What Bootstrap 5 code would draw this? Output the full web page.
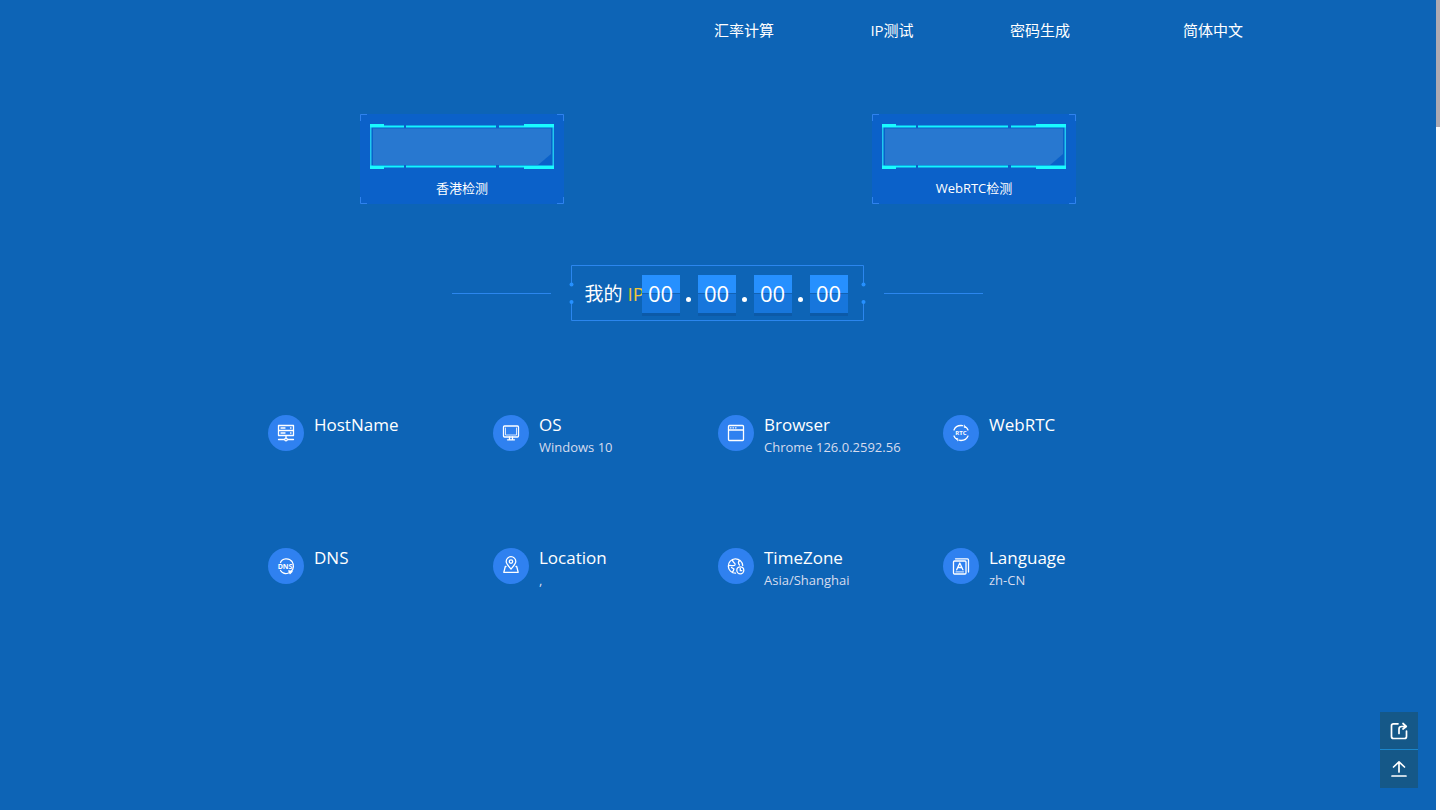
<!DOCTYPE html>
<html lang="zh-CN">
<head>
<meta charset="utf-8">
<meta name="viewport" content="width=device-width, initial-scale=1">
<title>我的 IP</title>
<link href="https://cdn.jsdelivr.net/npm/bootstrap@5.3.0/dist/css/bootstrap.min.css" rel="stylesheet">
<style>
  body { background: #0d64b6; color: #fff; font-family: "Open Sans", "Noto Sans CJK SC", sans-serif; padding-right: 4px; min-height: 100vh; }
  a, a:hover { color: #fff; text-decoration: none; }
  .site-nav { max-width: 1188px; height: 59px; }
  .site-nav .nav-link { width: 148px; padding: 0; text-align: center; font-size: 15px; line-height: 24px; color: #fff; }
  .site-nav .lang-link { width: 198px; }

  .checks { max-width: 716px; margin-top: 55px; }
  .check { width: 204px; height: 90px; background: #0b61c9; position: relative; padding-top: 9px; text-align: center; font-size: 13px; line-height: 20px; }
  .check .frame { display: block; width: 184px; height: 47px; margin: 0 auto 8px; }
  .check .corners { position: absolute; inset: 0; }

  .my-ip { margin-top: 61px; gap: 20px; padding-right: 2px; }
  .rule { width: 99px; height: 1px; background: #2b86ee; }
  .ip-box { position: relative; width: 293px; height: 56px; padding-top: 2px; }
  .ip-box .outline { position: absolute; inset: 0; overflow: visible; }
  .ip-label { width: 57px; margin-left: 14px; font-size: 19px; line-height: 28px; white-space: nowrap; }
  .ip-label span { color: #f0c63c; }
  .digit { width: 38px; height: 38px; font-size: 22px; line-height: 36px; text-align: center; background: linear-gradient(#2690ff 0 18px, #1262b4 18px 19px, #1776dc 19px); box-shadow: 0 3px 0 #0c5aa8; }
  .dot { width: 18px; display: flex; justify-content: center; padding-top: 10px; }
  .dot::before { content: ""; width: 5px; height: 5px; border-radius: 3px; background: #fff; }

  .facts { max-width: 900px; margin-top: 90px; }
  .fact { height: 133px; gap: 10px; }
  .fact-icon { width: 36px; height: 36px; margin-top: 4px; border-radius: 50%; background: #2f81f0; flex: none; }
  .fact h2 { font-size: 17px; line-height: 27px; font-weight: 400; margin: 0; }
  .fact p { font-size: 13px; line-height: 18px; margin: 0; color: #d6dcee; white-space: nowrap; }

  .side-tools { position: fixed; right: 22px; bottom: 22px; width: 38px; }
  .side-tools .btn { height: 37px; padding: 0; border: 0; border-radius: 0; background: #155888; color: #fff; }
  .side-tools .btn + .btn { height: 39px; border-top: 1px solid #1c86ca; }
  .side-tools .ico { stroke-width: 1.7; }
  .scroll-track { position: fixed; top: 0; right: 0; width: 4px; height: 100vh; background: #fcfcfc; }
  .scroll-thumb { height: 127px; background: #aeaab2; }
  .ico { fill: none; stroke: #fff; stroke-width: 1.3; stroke-linejoin: round; stroke-linecap: round; }
  .ico text { fill: #fff; stroke: none; font-family: "Open Sans", sans-serif; font-weight: 700; }
</style>
</head>
<body>
<svg class="d-none" aria-hidden="true">
  <symbol id="check-frame" viewBox="0 0 184 47">
    <path d="M3 5.500H181V31L168 42H3Z" fill="#2878d0"/>
    <path d="M.75 3V44M183.250 3V44" stroke="#20c8f0" stroke-width="1.500"/>
    <path d="M0 3.500H34M36 3.500H126M129 3.500H184M0 43.500H34M36 43.500H126M129 43.500H184" stroke="#14f4ff" stroke-width="2"/>
    <path d="M0 1H14V4H0ZM154 1H184V4H154ZM0 43H14V46H0ZM154 43H184V46H154Z" fill="#19fbff"/>
  </symbol>
  <symbol id="check-corners" viewBox="0 0 204 90">
    <path d="M.5 7V.5H7M197 .5H203.500V7M203.500 83V89.500H197M7 89.500H.5V83" fill="none" stroke="#2f82ee"/>
  </symbol>
</svg>

<header>
  <nav class="site-nav nav mx-auto justify-content-end align-items-center" aria-label="主导航">
    <a class="nav-link" href="#">汇率计算</a>
    <a class="nav-link" href="#">IP测试</a>
    <a class="nav-link" href="#">密码生成</a>
    <a class="nav-link lang-link" href="#">简体中文</a>
  </nav>
</header>

<main>
  <section class="checks mx-auto d-flex justify-content-between">
    <a class="check" href="#">
      <svg class="corners" width="204" height="90"><use href="#check-corners"/></svg>
      <svg class="frame"><use href="#check-frame"/></svg>香港检测
    </a>
    <a class="check" href="#">
      <svg class="corners" width="204" height="90"><use href="#check-corners"/></svg>
      <svg class="frame"><use href="#check-frame"/></svg>WebRTC检测
    </a>
  </section>

  <section class="my-ip d-flex justify-content-center align-items-center">
    <div class="rule"></div>
    <div class="ip-box d-flex align-items-center">
      <svg class="outline" width="293" height="56" viewBox="0 0 293 56" fill="none" stroke="#2b86ee">
        <path d="M.5 19V.5H292.500V19M.5 37V55.500H292.500V37"/>
        <g fill="#2690ff" stroke="none"><circle cx=".5" cy="19.500" r="2"/><circle cx=".5" cy="37" r="2"/><circle cx="292.500" cy="19.500" r="2"/><circle cx="292.500" cy="37" r="2"/></g>
      </svg>
      <div class="ip-label">我的 <span>IP</span></div>
      <div class="digit">00</div><div class="dot"></div>
      <div class="digit">00</div><div class="dot"></div>
      <div class="digit">00</div><div class="dot"></div>
      <div class="digit">00</div>
    </div>
    <div class="rule"></div>
  </section>

  <section class="facts mx-auto">
    <div class="row row-cols-4 g-0">
      <div class="col"><div class="fact d-flex">
        <svg class="fact-icon ico" viewBox="0 0 36 36"><path d="M10.500 10.500H25.500V15.500H10.500ZM10.500 15.500H25.500V20.500H10.500ZM13 13H17M22.500 13H23M13 18H17M22.500 18H23M18 20.500V23M10.500 24.500H16M20 24.500H25.500"/><circle cx="18" cy="24.500" r="1.300"/></svg>
        <div><h2>HostName</h2></div>
      </div></div>
      <div class="col"><div class="fact d-flex">
        <svg class="fact-icon ico" viewBox="0 0 36 36"><rect x="10.500" y="11" width="15" height="11" rx="1"/><path d="M12.500 13V20H23.500V13" stroke-width=".8"/><path d="M16.500 22V24.500M19.500 22V24.500M14.500 24.800H21.500"/></svg>
        <div><h2>OS</h2><p>Windows 10</p></div>
      </div></div>
      <div class="col"><div class="fact d-flex">
        <svg class="fact-icon ico" viewBox="0 0 36 36"><rect x="10.500" y="10.500" width="15" height="15" rx="1"/><path d="M10.500 15H25.500M12.500 12.800H13M15 12.800H15.500M17.500 12.800H18"/></svg>
        <div><h2>Browser</h2><p>Chrome 126.0.2592.56</p></div>
      </div></div>
      <div class="col"><div class="fact d-flex">
        <svg class="fact-icon ico" viewBox="0 0 36 36"><path d="M11 15C12 12.200 15 10.500 18 10.500L19.500 10.700M22 11.500C23.500 12.500 24.500 13.500 25 15M25 21C24 23.500 21 25.500 18 25.500L16 25.200M14 24.500C12.500 23.500 11.500 22.500 11 21"/><path d="M21.300 10.200V12.500H23M14.700 25.800V23.500H13" stroke-width=".9"/><text x="18" y="20.200" font-size="6" text-anchor="middle">RTC</text></svg>
        <div><h2>WebRTC</h2></div>
      </div></div>
      <div class="col"><div class="fact d-flex">
        <svg class="fact-icon ico" viewBox="0 0 36 36"><path d="M12.500 14.500C14 10 21 9.500 24 13.500C26 16.500 26 21 23 23.500M12.500 22.500C14.500 25.500 18 26 20.500 25"/><path d="M20.800 22.800L24 23.500L22 25.500Z" fill="#fff"/><text x="17" y="20.500" font-size="7" text-anchor="middle">DNS</text></svg>
        <div><h2>DNS</h2></div>
      </div></div>
      <div class="col"><div class="fact d-flex">
        <svg class="fact-icon ico" viewBox="0 0 36 36"><path d="M18 21C15 17.500 13.200 15.700 13.200 13.500A4.800 4.800 0 0 1 22.800 13.500C22.800 15.700 21 17.500 18 21ZM13 18.500H12.300L10.800 24.300H25.200L23.700 18.500H23"/><circle cx="18" cy="13.600" r="1.700"/></svg>
        <div><h2>Location</h2><p>,</p></div>
      </div></div>
      <div class="col"><div class="fact d-flex">
        <svg class="fact-icon ico" viewBox="0 0 36 36"><path d="M17.500 25.200A7.200 7.200 0 1 1 24.700 17.500M14.500 12C14.500 15 18 14.500 17 17C16 18.500 13 17 11 17.500M22 12.500C20 13 20 15.500 21.500 17M14.500 24.500L16 21L13.500 19.500"/><circle cx="22.300" cy="22.300" r="3.500"/><path d="M22.300 20.500V22.700H23.800"/></svg>
        <div><h2>TimeZone</h2><p>Asia/Shanghai</p></div>
      </div></div>
      <div class="col"><div class="fact d-flex">
        <svg class="fact-icon ico" viewBox="0 0 36 36"><rect x="10.500" y="13" width="12.500" height="13" rx="1"/><path d="M12.500 10.800H24.500Q25.500 10.800 25.500 12V24M13.700 21.800L16.800 15L19.900 21.800M14.700 19.500H18.800"/><path d="M13 23.900H20.500" stroke-width=".9"/></svg>
        <div><h2>Language</h2><p>zh-CN</p></div>
      </div></div>
    </div>
  </section>
</main>

<div class="side-tools d-flex flex-column">
  <button class="btn d-flex justify-content-center align-items-center" type="button" aria-label="分享">
    <svg class="ico" width="18" height="18" viewBox="0 0 18 18"><path d="M8 1.800H3.500Q1.500 1.800 1.500 3.800V14.500Q1.500 16.500 3.500 16.500H14.500Q16.500 16.500 16.500 14.500V9M9 11.500V7Q9 4.500 11.500 4.500H16M13 1.500L16.300 4.500L13 7"/></svg>
  </button>
  <button class="btn d-flex justify-content-center align-items-center" type="button" aria-label="返回顶部">
    <svg class="ico" width="18" height="18" viewBox="0 0 18 18"><path d="M9 12V2M3.500 7L9 1.800L14.500 7M2 16H16"/></svg>
  </button>
</div>
<div class="scroll-track" aria-hidden="true"><div class="scroll-thumb"></div></div>
<script src="https://cdn.jsdelivr.net/npm/bootstrap@5.3.0/dist/js/bootstrap.bundle.min.js"></script>
</body>
</html>
